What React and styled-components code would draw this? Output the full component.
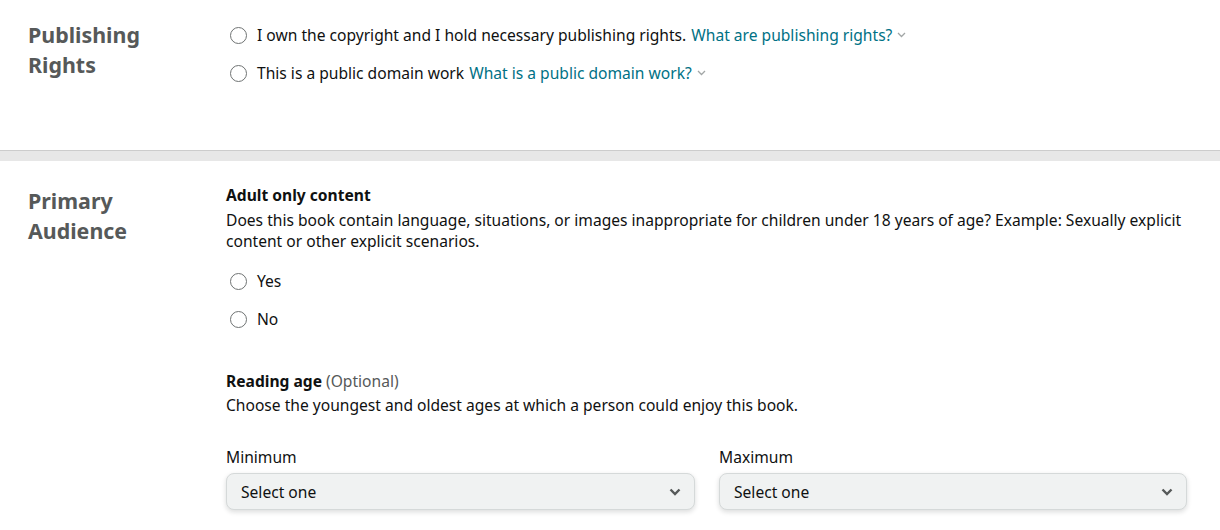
import React from "react";
import styled, { createGlobalStyle } from "styled-components";

const GlobalStyle = createGlobalStyle`
  body {
    margin: 0;
    background: #ffffff;
    font-family: "Noto Sans", "Liberation Sans", sans-serif;
    color: #0f1111;
  }
`;

const Page = styled.div`
  width: 1220px;
  height: 530px;
  overflow: hidden;
`;

const Section = styled.section`
  display: grid;
  grid-template-columns: 198px 961px;
  padding: ${(p) => p.$top}px 0 0 28px;
  height: ${(p) => p.$height}px;
  box-sizing: border-box;
`;

const Divider = styled.div`
  height: 10px;
  border-top: 1px solid #cccccc;
  background: #e7e7e7;
`;

const Heading = styled.h2`
  margin: ${(p) => p.$mt || 0}px 0 0;
  font-size: 21.4px;
  line-height: 30px;
  font-weight: 700;
  color: #565959;
`;

const Content = styled.div`
  display: flex;
  flex-direction: column;
`;

const RadioList = styled.div`
  display: flex;
  flex-direction: column;
  gap: 18px;
  margin-top: ${(p) => p.$mt || 0}px;
`;

const RadioRow = styled.label`
  display: flex;
  align-items: center;
  font-size: 15.6px;
  line-height: 20px;
  height: 20px;
`;

const Circle = styled.span`
  width: 15px;
  height: 15px;
  border: 1px solid #6f7373;
  border-radius: 50%;
  margin: 0 10px 0 4px;
  flex-shrink: 0;
`;

const Link = styled.a`
  color: #007185;
  margin-left: 5px;
  display: inline-flex;
  align-items: center;
  gap: 5px;
  cursor: pointer;
`;

const Title = styled.div`
  font-size: 15.6px;
  line-height: 20px;
  font-weight: 700;
  margin-top: ${(p) => p.$mt || 0}px;
`;

const Muted = styled.span`
  font-weight: 400;
  color: #565959;
`;

const Text = styled.p`
  margin: ${(p) => p.$mt || 0}px 0 0;
  font-size: 15.6px;
  line-height: 21px;
`;

const SelectGrid = styled.div`
  display: grid;
  grid-template-columns: 469px 468px;
  column-gap: 24px;
  margin-top: 31px;
`;

const Field = styled.div`
  display: flex;
  flex-direction: column;
  gap: 6px;
`;

const FieldLabel = styled.div`
  font-size: 15.6px;
  line-height: 20px;
`;

const Select = styled.div`
  height: 37px;
  box-sizing: border-box;
  display: flex;
  align-items: center;
  justify-content: space-between;
  padding: 0 13px 0 14px;
  background: #f0f2f2;
  border: 1px solid #d5d9d9;
  border-radius: 8px;
  box-shadow: 0 2px 5px rgba(15, 17, 17, 0.15);
  font-size: 15.6px;
`;

const SmallChevron = () => (
  <svg width="9" height="6" viewBox="0 0 9 6">
    <path d="M1 1l3.5 3.5L8 1" fill="none" stroke="#a2a6a6" strokeWidth="1.3" />
  </svg>
);

const Chevron = () => (
  <svg width="12" height="8" viewBox="0 0 12 8">
    <path d="M1.5 1.5L6 6l4.5-4.5" fill="none" stroke="#565959" strokeWidth="2.4" />
  </svg>
);

const Radio = ({ children }) => (
  <RadioRow>
    <Circle />
    <span>{children}</span>
  </RadioRow>
);

const AgeSelect = ({ label }) => (
  <Field>
    <FieldLabel>{label}</FieldLabel>
    <Select>
      <span>Select one</span>
      <Chevron />
    </Select>
  </Field>
);

export default function App() {
  return (
    <Page>
      <GlobalStyle />
      <Section $top={19} $height={150}>
        <Heading $mt={1}>
          Publishing
          <br />
          Rights
        </Heading>
        <Content>
          <RadioList $mt={6}>
            <Radio>
              I own the copyright and I hold necessary publishing rights.
              <Link>
                What are publishing rights? <SmallChevron />
              </Link>
            </Radio>
            <Radio>
              This is a public domain work
              <Link>
                What is a public domain work? <SmallChevron />
              </Link>
            </Radio>
          </RadioList>
        </Content>
      </Section>
      <Divider />
      <Section $top={24} $height={370}>
        <Heading $mt={1}>
          Primary
          <br />
          Audience
        </Heading>
        <Content>
          <Title>Adult only content</Title>
          <Text $mt={5}>
            Does this book contain language, situations, or images inappropriate for children under 18 years of age? Example: Sexually explicit content or other explicit scenarios.
          </Text>
          <RadioList $mt={19}>
            <Radio>Yes</Radio>
            <Radio>No</Radio>
          </RadioList>
          <Title $mt={42}>
            Reading age <Muted>(Optional)</Muted>
          </Title>
          <Text $mt={4}>Choose the youngest and oldest ages at which a person could enjoy this book.</Text>
          <SelectGrid>
            <AgeSelect label="Minimum" />
            <AgeSelect label="Maximum" />
          </SelectGrid>
        </Content>
      </Section>
    </Page>
  );
}
